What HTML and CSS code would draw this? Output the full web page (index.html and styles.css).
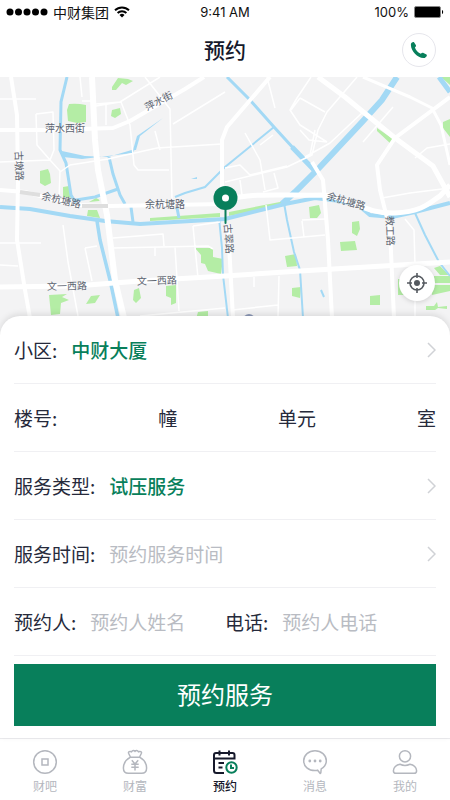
FILE: index.html
```
<!DOCTYPE html>
<html lang="zh-CN">

<head>
    <meta charset="UTF-8">
    <meta name="viewport" content="width=device-width, initial-scale=1.0">
    <title>预约</title>
    <link rel="stylesheet" href="styles.css">
</head>

<body>
    <div class="status-bar">
        <div class="carrier">
            <svg width="42" height="10" viewBox="0 0 42 10" aria-hidden="true">
                <circle cx="4" cy="5" r="3.5" />
                <circle cx="12.5" cy="5" r="3.5" />
                <circle cx="21" cy="5" r="3.5" />
                <circle cx="29.5" cy="5" r="3.5" />
                <circle cx="38" cy="5" r="3.5" />
            </svg>
            <span>中财集团</span>
            <svg width="16" height="12" viewBox="0 0 16 12" aria-hidden="true">
                <path d="M1 4.3a10 10 0 0 1 14 0M3.6 7a6.3 6.3 0 0 1 8.800 0" fill="none" stroke="#000" stroke-width="1.9" />
                <path d="M8 11.5 5.5 9a3.6 3.6 0 0 1 5 0z" />
            </svg>
        </div>
        <div class="time">9:41 AM</div>
        <div class="battery">
            <span>100%</span>
            <svg width="30" height="12" viewBox="0 0 30 12" aria-hidden="true">
                <rect x="0.5" y="0.5" width="26" height="11" rx="1.5" fill="#000" stroke="#888" />
                <path d="M28 4c1.5.4 1.5 3.600 0 4z" />
            </svg>
        </div>
    </div>

    <header class="header">
        <h1>预约</h1>
        <button class="call-button" type="button" aria-label="电话">
            <svg width="18" height="18" viewBox="0 0 18 18" aria-hidden="true">
                <path d="M1 2.800C1.600 1.300 3.300.5 4.200 1.400L5.800 4c.6 1-.1 1.700-.9 2.500.9 2.600 3.200 5 5.900 6.300.9-.8 1.700-1.300 2.700-.8l3 1.500c1 .9-.2 2.800-1.700 3.400C8.500 18.400-.2 9.600 1 2.800z" fill="#087f5b" />
            </svg>
        </button>
    </header>

    <main>
        <div class="map">
            <svg class="map-canvas" viewBox="0 77 450 260" role="img" aria-label="地图">
                <rect y="77" width="450" height="260" fill="#f3f3f4" />
                <g fill="#b4eda5">
                    <path d="M69 104q8-1 17 1v17l-9 1-9-2-1-11zM112 87l6-9 10 1 5 2-7 4-4-2-6 7-4 0zM112 110l8-2 1 6-6 4-4-2zM40 171l8-2 2 5 1 9-6 3-5-3zM63 187l6-1 2 9 3 3-11-1zM96 198q5 2 3 3l-10 1zM88 210l9 0 3 8-13-2z" />
                    <path d="M377 128l16 11-2 5-14-13zM441 77h9v8zM443 122l7-3v18l-7-9zM309 207l10-2 2 8-4 5-7 0zM352 222l7-1 1 8-3 7-5-3zM340 242l15-1 2 9-16 1zM285 256l11-2 1 12-10 1zM292 288l9-1-1 11-8-2zM370 296l10-1v10l-10 0z" />
                    <path d="M150 218l70-5v4l-70 4zM229 212l56-11v4l-56 11zM195 248h18v9l10 2-2 15-13-3-3-7-4-1v-8zM49 295l18-1-5 3 7 3-8 3-1 11-9 1zM91 296l9-1-5 8-9 1zM134 290l5-2 2 10-5 5-3-3zM166 286l10-1v18l-5 2v-7l-5-2zM198 312l10-1v8h-12z" />
                    <path d="M398 279h12v6l-2 1v9h-10zM434 268l6-2 9 9-9 0zM434 276h16v7h-16zM432 285h18v6l-18 4zM426 306h8l3-4 1 5 9-1v3l-9-1-3 2h-9z" />
                </g>
                <g class="water">
                    <path d="M67 77 61 102 60 150 66 163 71 195 76 203" stroke-width="3" />
                    <path d="M118 189 95 197 76 200M109 157 113 174 120 195 125 204M131 207 133 222M177 208 179 218" stroke-width="3" />
                    <path d="M97 221 100 240 110 280 118 318" stroke-width="3.500" />
                    <path d="M0 207 30 209 70 216 105 221 140 224 225 219 285 204 315 198 340 201 358 205 370 215 392 217 415 212 450 203" stroke-width="4" />
                    <path d="M175 197 185 193 205 187 225 167 274 127M219 218 222 248 223 275 228 318" stroke-width="2" />
                    <path d="M227 77 250 100 274 127 295 150" stroke-width="3" />
                    <path d="M292 147 315 171M439 77 450 92" stroke-width="5" />
                    <path d="M397 77 382 100 363 121 320 167 295 192 282 204" stroke-width="6" />
                    <path d="M284 203 287 220 294 252 300 270 303 318" stroke-width="2" />
                    <path d="M415 213 425 235 439 262 450 276M321 290 324 297" stroke-width="2" />
                    <path d="M62 151 85 156 108 157 135 149 133 153 82 159 63 157zM133 150 137 136 163 118 140 136 136 150zM191 179l6-2v2z" class="water-area" />
                </g>
                <g class="road-thin">
                    <path d="M0 99H36M80 77 82 97M36 114 53 112 54 150 50 160 60 171 59 200M36 114 37 145 50 160 0 162M82 101H92M96 104 121 102 130 125 134 165 138 170 169 170M106 105V125M96 106 120 102 160 77M145 77 170 109 172 200M173 124 225 92M155 131 160 150M60 172 70 165 108 159 157 148 222 144" />
                    <path d="M267 77 275 108M311 77 297 98 290 110 300 125 327 142M300 98 325 112M300 98 291 110M357 77 327 112 318 130 312 155 287 167 225 182M315 130 310 155M300 130 309 140 327 142M393 107 363 142M362 113 330 143 305 157M245 133 260 160 265 190M260 145 273 135M225 168 240 165 250 175 287 166M240 180 242 195M274 173 278 188 263 192M415 158 427 148 450 144M382 198 410 193 450 188" />
                    <path d="M0 243H41M63 225 68 262 78 316M0 265 18 266M85 248 97 246M85 248 92 281M113 238 163 234 164 246M113 248 208 246 213 249M155 248V256M175 247 179 311M193 226 198 278M193 226 220 222M232 310 278 305M279 276 278 316M254 277V287M266 205 270 240 325 235M302 220 325 219M302 221 304 237M405 219 414 230 415 265M415 300V316M140 316 225 308" />
                </g>
                <g class="road">
                    <path d="M92 77 95 140 98 170 107 215 115 280 124 318" stroke-width="6" />
                    <path d="M11 77 17 115 18 180 17 240 25 290 30 318" stroke-width="4" />
                    <path d="M0 130 50 130 113 128 130 121 185 89 204 77" stroke-width="4" />
                    <path d="M0 190 25 192 75 205 110 206 225 204" stroke-width="4" />
                    <path d="M0 287 75 286 140 281 225 276 300 271 450 262" stroke-width="5" />
                    <path d="M270 77 227 127 222 140 222 190" stroke-width="4" />
                    <path d="M318 77 345 97 395 138 433 166 450 197" stroke-width="5" />
                    <path d="M450 97 395 138 377 165 380 190 390 230 394 318" stroke-width="4" />
                    <path d="M363 77 410 97 432 108 441 125 450 165" stroke-width="3" />
                    <path d="M225 200C255 192 285 196 325 195 353 199 365 214 395 213 425 211 430 202 440 196L450 185" stroke-width="5" />
                    <path d="M312 162 323 180 328 240 332 318M228 225 233 318" stroke-width="4" />
                </g>
                <path d="M20 192 40 195M82 206 108 206" class="road-grey" />
                <g class="map-labels">
                    <text x="45" y="132">萍水西街</text>
                    <text transform="translate(147 111) rotate(-27)">萍水街</text>
                    <text transform="translate(15 151) rotate(88)">古墩路</text>
                    <text transform="translate(41 199) rotate(13)">余杭塘路</text>
                    <text x="145" y="208">余杭塘路</text>
                    <text transform="translate(224 224) rotate(86)">古翠路</text>
                    <text transform="translate(326 199) rotate(16)">余杭塘路</text>
                    <text transform="translate(386 216) rotate(88)">教工路</text>
                    <text transform="translate(47 290) rotate(-1)">文一西路</text>
                    <text transform="translate(137 285) rotate(-2)">文一西路</text>
                </g>
                <circle cx="249" cy="320" r="6" fill="#8b97b5" />
                <path d="M225.5 205V223" stroke="#087f5b" stroke-width="2" stroke-linecap="round" />
                <circle cx="225.5" cy="198" r="12" fill="#087f5b" />
                <circle cx="225.5" cy="198" r="3.5" fill="#fff" />
            </svg>
            <button class="locate-button" type="button" aria-label="定位">
                <svg width="20" height="20" viewBox="0 0 20 20" aria-hidden="true">
                    <circle cx="10" cy="10" r="7" fill="none" stroke="#555a60" stroke-width="1.6" />
                    <circle cx="10" cy="10" r="3" fill="#555a60" />
                    <path d="M10 0V5M10 15V20M0 10H5M15 10H20" stroke="#555a60" stroke-width="1.6" />
                </svg>
            </button>
        </div>

        <form class="booking">
            <div class="row">
                <label for="community">小区:</label>
                <input class="picked" type="text" id="community" name="community" value="中财大厦" readonly>
                <svg class="chevron" width="9" height="16" viewBox="0 0 9 16" aria-hidden="true"><path d="M1 1 8 8 1 15" /></svg>
            </div>
            <div class="row row-building">
                <label for="building">楼号:</label>
                <input type="text" id="building" name="building">
                <label for="building">幢</label>
                <input type="text" id="unit" name="unit">
                <label for="unit">单元</label>
                <input type="text" id="room" name="room">
                <label for="room">室</label>
            </div>
            <div class="row">
                <label for="service-type">服务类型:</label>
                <select class="picked" id="service-type" name="service-type">
                    <option>试压服务</option>
                </select>
                <svg class="chevron" width="9" height="16" viewBox="0 0 9 16" aria-hidden="true"><path d="M1 1 8 8 1 15" /></svg>
            </div>
            <div class="row">
                <label for="service-time">服务时间:</label>
                <input type="text" id="service-time" name="service-time" placeholder="预约服务时间" readonly>
                <svg class="chevron" width="9" height="16" viewBox="0 0 9 16" aria-hidden="true"><path d="M1 1 8 8 1 15" /></svg>
            </div>
            <div class="row row-contact">
                <div class="field">
                    <label for="name">预约人:</label>
                    <input type="text" id="name" name="name" placeholder="预约人姓名">
                </div>
                <div class="field">
                    <label for="phone">电话:</label>
                    <input type="tel" id="phone" name="phone" placeholder="预约人电话">
                </div>
            </div>
            <button class="submit-button" type="submit">预约服务</button>
        </form>
    </main>

    <nav class="tab-bar">
        <a class="tab" href="#">
            <svg width="26" height="26" viewBox="0 0 26 26" aria-hidden="true">
                <circle cx="13" cy="13" r="11.3" />
                <rect x="10" y="10" width="6" height="6" />
            </svg>
            <span>财吧</span>
        </a>
        <a class="tab" href="#">
            <svg width="26" height="26" viewBox="0 0 26 26" aria-hidden="true">
                <path d="M8.500 8.200C3.500 11 1.400 14.500 1.400 19c0 3.500 1.600 5.300 5 5.300h13.200c3.400 0 5-1.800 5-5.300 0-4.500-2.100-8-7.100-10.800zM8.500 8.200 6.600 4.200c-.5-1.400 1-2.200 2.900-1.400C10.600.9 12 1.100 13 2.300c1-1.200 2.400-1.400 3.500.5 1.900-.8 3.400 0 2.900 1.400l-1.900 4" />
                <path d="M9.800 11.300 13 15l3.200-3.700M9.300 15.300h7.400M9.300 18.200h7.400M13 15v6.500" />
            </svg>
            <span>财富</span>
        </a>
        <a class="tab tab-active" href="#">
            <svg width="26" height="26" viewBox="0 0 26 26" aria-hidden="true">
                <path d="M12 24H4.500Q2 24 2 21.500V6Q2 4 4 4H20.500Q22.500 4 22.500 6V10.500M2 9.500H22.500M7.500 1.500V6.500M17 1.500V6.500M6.500 14H12M6.500 18.500H10.500" />
                <circle class="clock" cx="19.5" cy="18.5" r="5.200" />
                <path class="clock" d="M19 15.500V19H22" />
            </svg>
            <span>预约</span>
        </a>
        <a class="tab" href="#">
            <svg width="26" height="26" viewBox="0 0 26 26" aria-hidden="true">
                <path d="M13 1.700C6.700 1.700 1.700 6 1.700 11.800S6.500 21.500 13 21.500c1 0 1.800-.1 2.600-.3L18 24.300c.4.300.7.1.8-.4l.4-4c3.200-2 5.100-4.700 5.100-8.100C24.300 6 19.300 1.700 13 1.700z" />
                <g class="dots">
                    <circle cx="7.8" cy="12" r="1.400" />
                    <circle cx="13" cy="12" r="1.400" />
                    <circle cx="18.2" cy="12" r="1.400" />
                </g>
            </svg>
            <span>消息</span>
        </a>
        <a class="tab" href="#">
            <svg width="26" height="26" viewBox="0 0 26 26" aria-hidden="true">
                <circle cx="13" cy="7.3" r="5.600" />
                <path d="M8 15.300q5 2.300 10 0c3.800.4 6.600 3.300 6.600 6.400 0 1.700-1 2.600-2.600 2.600H4c-1.600 0-2.600-.9-2.600-2.600 0-3.100 2.800-6 6.600-6.400z" />
            </svg>
            <span>我的</span>
        </a>
    </nav>
</body>

</html>
```
FILE: styles.css
```
* {
    box-sizing: border-box;
}

body {
    display: flex;
    flex-direction: column;
    min-height: 100vh;
    margin: 0;
    background: #fff;
    color: #262a3b;
    font-family: "Noto Sans CJK SC", sans-serif;
}

button,
input,
select {
    margin: 0;
    padding: 0;
    border: none;
    background: none;
    color: inherit;
    font: inherit;
}

/* status bar */
.status-bar {
    display: grid;
    grid-template-columns: 1fr auto 1fr;
    align-items: center;
    height: 24px;
    padding: 0 6px;
    color: #111;
    font-size: 14px;
    line-height: 24px;
}

.carrier,
.battery {
    display: flex;
    align-items: center;
    gap: 5px;
}

.battery {
    justify-content: flex-end;
}

.time,
.battery {
    font-family: Inter, sans-serif;
}

.time {
    font-size: 13px;
}

.battery {
    font-size: 13px;
}

/* header */
.header {
    display: grid;
    grid-template-columns: 1fr auto 1fr;
    align-items: center;
    height: 53px;
    padding: 0 14px 2px;
}

.header h1 {
    grid-column: 2;
    margin: 0;
    padding-bottom: 2px;
    color: #16192b;
    font-size: 21px;
    font-weight: 500;
    line-height: 32px;
}

.call-button {
    display: flex;
    justify-content: center;
    align-items: center;
    justify-self: end;
    width: 34px;
    height: 34px;
    border: 1px solid #e6e6ec;
    border-radius: 50%;
    cursor: pointer;
}

/* map */
.map {
    position: relative;
}

.map-canvas {
    display: block;
    width: 100%;
    height: auto;
}

.water path {
    fill: none;
    stroke: #a3d9f5;
}

.water .water-area {
    fill: #a3d9f5;
    stroke: none;
}

.road path,
.road-thin path {
    fill: none;
    stroke: #fff;
    stroke-linejoin: round;
}

.road-thin path {
    stroke-width: 1.5px;
}

.road-grey {
    fill: none;
    stroke: #dedede;
    stroke-width: 4px;
}

.map-labels {
    fill: #5c6470;
    font-size: 10px;
}

.locate-button {
    position: absolute;
    right: 15px;
    bottom: 36px;
    display: flex;
    justify-content: center;
    align-items: center;
    width: 36px;
    height: 36px;
    border-radius: 50%;
    background: #fff;
    box-shadow: 0 1px 5px rgba(0, 0, 0, 0.15);
    cursor: pointer;
}

/* booking form */
.booking {
    position: relative;
    margin-top: -21px;
    padding: 0 14px 12px;
    border-radius: 20px 20px 0 0;
    background: #fff;
    box-shadow: 0 -2px 6px rgba(0, 0, 0, 0.1);
    font-size: 19px;
    line-height: 28px;
}

.row {
    display: flex;
    align-items: center;
    gap: 14px;
    height: 68px;
    border-bottom: 1px solid #f0f0f3;
}

.row label {
    flex: none;
}

.row input,
.row select {
    flex: 1;
    min-width: 0;
    height: 28px;
    outline: none;
    appearance: none;
}

.row input::placeholder {
    color: #b9bcc3;
    opacity: 1;
}

.row .picked {
    color: #087f5b;
    font-weight: 500;
}

.row-building,
.row-contact {
    gap: 0;
}

.field {
    display: flex;
    flex: 1;
    gap: 14px;
    min-width: 0;
}

.chevron {
    flex: none;
    fill: none;
    stroke: #d0d2d6;
    stroke-width: 1.5px;
}

.submit-button {
    width: 100%;
    height: 62px;
    margin-top: 8px;
    padding-bottom: 2px;
    background: #087f5b;
    color: #fff;
    font-size: 24px;
    line-height: 36px;
    cursor: pointer;
}

/* tab bar */
.tab-bar {
    display: flex;
    margin-top: auto;
    height: 62px;
    border-top: 1px solid #ececef;
}

.tab {
    display: flex;
    flex: 1;
    flex-direction: column;
    align-items: center;
    padding-top: 10px;
    color: #b4b7be;
    font-size: 12px;
    line-height: 22px;
    text-decoration: none;
}

.tab svg {
    fill: none;
    stroke: currentColor;
    stroke-width: 1.5px;
}

.tab .dots {
    fill: currentColor;
    stroke: none;
}

.tab-active {
    color: #16192b;
    font-weight: 500;
}

.tab-active svg {
    stroke-width: 2px;
}

.tab-active .clock {
    stroke: #087f5b;
}
```
